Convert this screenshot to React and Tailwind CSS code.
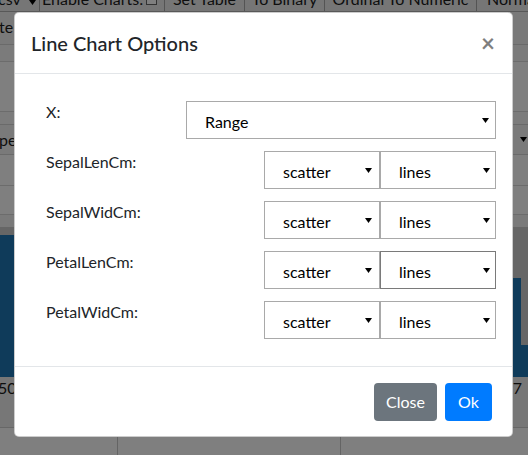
import React from "react";

function Caret({ className = "" }) {
  return (
    <svg width="7" height="5" viewBox="0 0 7 5" className={"shrink-0 " + className} aria-hidden="true">
      <path d="M0 0H7L3.5 5Z" fill="#000" />
    </svg>
  );
}

function Select({ value, className }) {
  return (
    <div
      className={
        "flex h-[38px] shrink-0 items-center justify-between bg-white pl-[18px] text-[16px] text-black " +
        className
      }
    >
      <span className="pt-[4px] leading-none">{value}</span>
      <Caret />
    </div>
  );
}

function Label({ children }) {
  return <div className="pl-[15px] text-[16px] leading-[22px] text-[#212529]">{children}</div>;
}

function Page() {
  return (
    <div className="flex h-full flex-col bg-white text-[16px] text-[#1c1c1c]">
      {/* toolbar */}
      <div className="flex h-[12px] shrink-0 overflow-hidden whitespace-nowrap border-b border-[#b0b0b0] bg-[#ececec]">
        <div className="flex w-[40px] shrink-0 items-start border-r border-[#a8a8a8]">
          <span className="-ml-[2px] -mt-[9px] leading-[16px]">csv</span>
          <Caret className="ml-[8px]" />
        </div>
        <div className="flex w-[125px] shrink-0 items-start border-r border-[#a8a8a8] pl-[2px]">
          <span className="-mt-[9px] leading-[16px]">Enable Charts:</span>
          <span className="ml-auto mr-[7px] -mt-[6px] h-[11px] w-[11px] shrink-0 border border-[#666] bg-white" />
        </div>
        <div className="flex w-[80px] shrink-0 justify-center border-r border-[#a8a8a8]">
          <span className="-mt-[9px] leading-[16px]">Set Table</span>
        </div>
        <div className="flex w-[80px] shrink-0 justify-center border-r border-[#a8a8a8]">
          <span className="-mt-[9px] leading-[16px]">To Binary</span>
        </div>
        <div className="flex w-[152px] shrink-0 justify-center border-r border-[#a8a8a8]">
          <span className="-mt-[9px] leading-[16px]">Ordinal To Numeric</span>
        </div>
        <div className="flex flex-1 pl-[10px]">
          <span className="-mt-[9px] leading-[16px]">Normalize</span>
        </div>
      </div>
      {/* table-ish rows */}
      <div className="flex h-[33px] shrink-0 items-end border-b border-[#d4d4d4] bg-[#f2f2f2] pb-[7px]">
        <span className="-ml-[1px] leading-[20px]">te</span>
      </div>
      <div className="h-[17px] shrink-0 border-b border-[#d8d8d8] bg-[#f6f6f6]" />
      <div className="h-[50px] shrink-0 border-b border-[#d8d8d8]" />
      <div className="h-[13px] shrink-0 border-b border-[#d4d4d4] bg-[#f8f8f8]" />
      <div className="flex h-[30px] shrink-0 items-center justify-between border-b border-[#d4d4d4] bg-[#f4f4f4]">
        <span className="-ml-[1px] leading-[20px]">pe.</span>
        <Caret className="mr-[1px]" />
      </div>
      <div className="h-[31px] shrink-0 border-b border-[#d8d8d8]" />
      <div className="h-[29px] shrink-0 border-b border-[#d8d8d8]" />
      <div className="h-[12px] shrink-0 bg-[#f4f4f4]" />
      {/* chart */}
      <svg width="528" height="150" viewBox="0 0 528 150" className="block shrink-0">
        <rect x="0" y="0" width="528" height="150" fill="#cdcdcd" />
        <rect x="0" y="8" width="14" height="142" fill="#1f77b4" />
        <rect x="500" y="51" width="21" height="99" fill="#1f77b4" />
        <rect x="521" y="118" width="7" height="32" fill="#1f77b4" />
      </svg>
      <div className="flex h-[50px] shrink-0 items-start justify-between bg-[#eeeeee] pt-[2px]">
        <span className="-ml-[2px] leading-[18px]">50</span>
        <span className="mr-[6px] leading-[18px]">7</span>
      </div>
      <div className="flex flex-1 border-t border-[#cfcfcf]">
        <div className="w-[118px] border-r border-[#c8c8c8]" />
        <div className="w-[223px] border-r border-[#c8c8c8]" />
        <div className="flex-1" />
      </div>
    </div>
  );
}

export default function App() {
  const series = ["SepalLenCm", "SepalWidCm", "PetalLenCm", "PetalWidCm"];
  return (
    <div className="relative h-[455px] w-[528px] overflow-hidden font-[Lato,'Liberation_Sans',sans-serif]">
      <Page />
      <div className="absolute inset-0 bg-black/50" />
      <div className="absolute inset-0">
        <div className="ml-[14px] mt-[12px] w-[499px] rounded-[5px] border border-black/20 bg-white">
          {/* header */}
          <div className="flex h-[61px] items-center border-b border-[#e3e6e9] pl-[16px] pr-[17px]">
            <h5 className="text-[20px] font-medium leading-[30px] text-[#212529]">Line Chart Options</h5>
            <span className="ml-auto text-[24px] font-bold leading-none text-black opacity-50">×</span>
          </div>
          {/* body */}
          <div className="flex flex-col gap-[12px] px-[16px] py-[27px]">
            <div className="flex h-[38px] items-start">
              <Label>X:</Label>
              <Select value="Range" className="ml-auto w-[310px] border border-[#a9a9a9] pr-[6px]" />
            </div>
            {series.map((s, i) => (
              <div key={s} className="flex h-[38px] items-start">
                <Label>{s}:</Label>
                <Select value="scatter" className="ml-auto w-[116px] border border-[#a9a9a9] pr-[7px]" />
                <Select
                  value="lines"
                  className={
                    i === 2
                      ? "w-[116px] border border-[#7a7a7a] pr-[5px]"
                      : "w-[116px] border border-[#a9a9a9] pr-[5px]"
                  }
                />
              </div>
            ))}
          </div>
          {/* footer */}
          <div className="flex justify-end gap-[8px] border-t border-[#e3e6e9] pb-[15px] pr-[20px] pt-[16px]">
            <button className="flex h-[38px] w-[63px] items-center justify-center rounded-[4px] bg-[#6c757d] text-[16px] text-white">
              Close
            </button>
            <button className="flex h-[38px] w-[47px] items-center justify-center rounded-[4px] bg-[#007bff] text-[16px] text-white">
              Ok
            </button>
          </div>
        </div>
      </div>
    </div>
  );
}
